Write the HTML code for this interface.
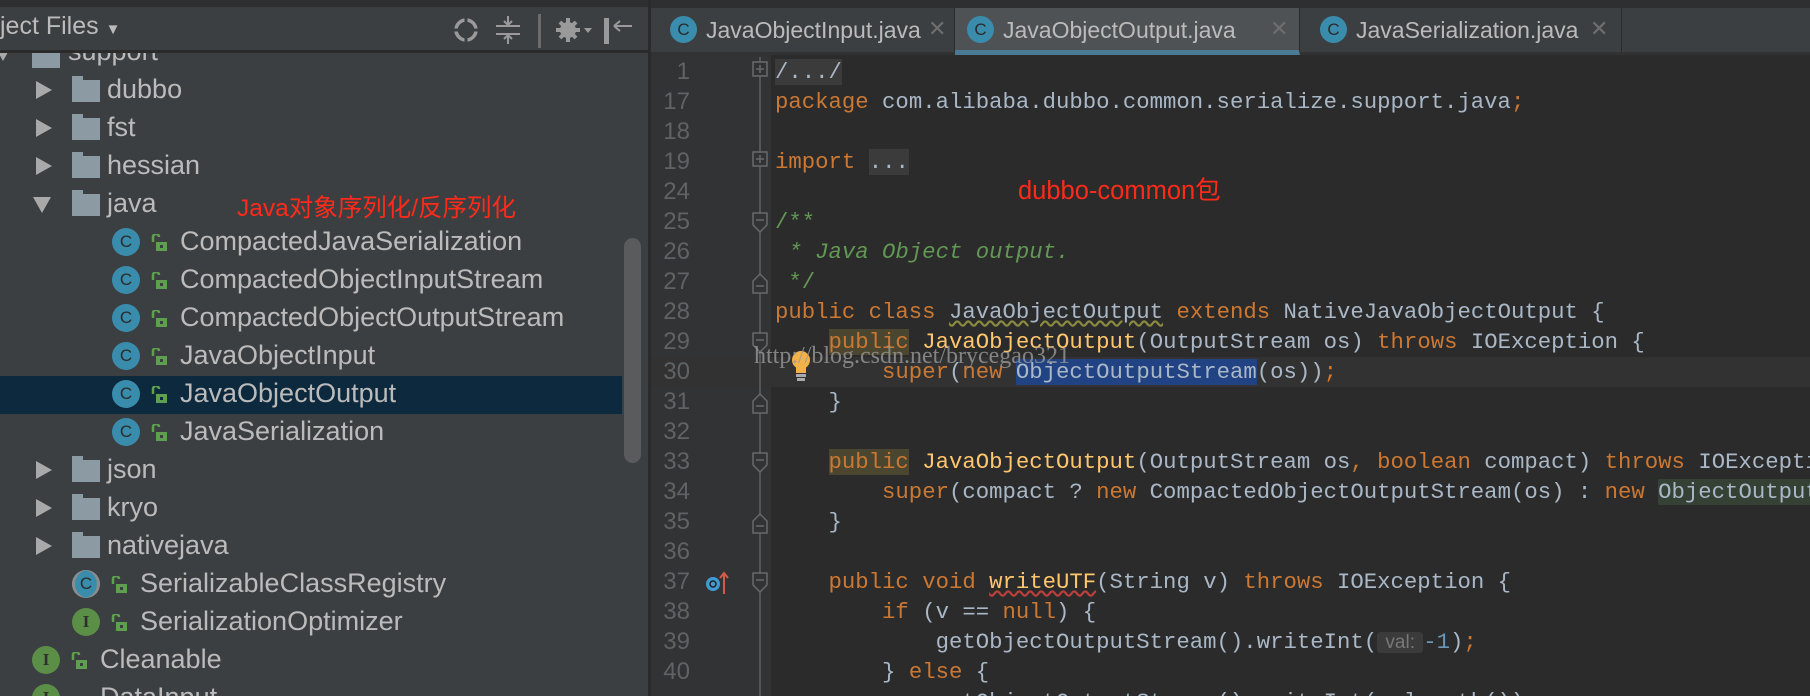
<!DOCTYPE html>
<html style="overflow:hidden;width:1810px;height:696px"><head><meta charset="utf-8"><style>
*{margin:0;padding:0;box-sizing:border-box}
body{width:1810px;height:696px;overflow:hidden;background:#2b2b2b;font-family:"Liberation Sans",sans-serif}
#wrap{position:relative;width:1810px;height:696px;overflow:hidden}
.abs{position:absolute}
#left{left:0;top:0;width:650px;height:696px;background:#3c3f41;overflow:hidden}
.row{position:absolute;left:0;width:622px;height:38px;font-size:27px;color:#bbbbbb;white-space:nowrap}
.row span.t{position:absolute;top:3px}
.arr{position:absolute;top:10px;width:0;height:0;border-top:9px solid transparent;border-bottom:9px solid transparent;border-left:16px solid #a9a9a9}
.arrd{position:absolute;top:12px;width:0;height:0;border-left:9px solid transparent;border-right:9px solid transparent;border-top:16px solid #a9a9a9}
.fold{position:absolute;top:9px;width:28px;height:22px;background:#8c9aa4}
.fold:before{content:"";position:absolute;left:0;top:-4px;width:11px;height:4px;background:#8c9aa4}
.ci{position:absolute;top:5px;width:28px;height:28px;border-radius:50%;background:#3a8cad;color:#2b2b2b;font-size:17px;text-align:center;line-height:28px;font-family:"Liberation Sans",sans-serif}
.ii{background:#5b8f48;font-family:"Liberation Serif",serif;font-weight:bold;color:#2f2f2f}
.lk{position:absolute;top:11px;width:18px;height:18px}
#code{font-family:"Liberation Mono",monospace;font-size:22.3px;color:#a9b7c6;white-space:pre}
.ln{position:absolute;left:650px;width:40px;text-align:right;font-family:"Liberation Sans",sans-serif;font-size:24px;color:#606366}
.cl{position:absolute;left:775px;height:30px;line-height:30px}
.k{color:#cc7832}.g{color:#629755;font-style:italic}.y{color:#ffc66d}.n{color:#6897bb}
.tab{position:absolute;top:8px;height:44px;font-size:23px;color:#bbbbbb;border-right:1px solid #2b2b2b}
.tab .c{position:absolute;left:12px;top:8px;width:27px;height:27px;border-radius:50%;background:#3a8cad;color:#2b2b2b;font-size:17px;text-align:center;line-height:27px}
.tab .tx{position:absolute;left:48px;top:9px}
.tab .x{position:absolute;top:8px;color:#6e6e6e;font-size:22px}
</style></head><body><div id="wrap">

<div id="left" class="abs">
 <div class="abs" style="left:0;top:53px;width:650px;height:643px;overflow:hidden">
  <div class="row" style="top:-20px"><div class="arrd" style="left:-6px"></div><div class="fold" style="left:32px;top:13px"></div><span class="t" style="left:68px">support</span></div>
 </div>
 <div class="abs" style="left:0;top:0;width:650px;height:7px;background:#2d2f30"></div>
 <div class="abs" style="left:0;top:7px;width:650px;height:46px;background:#3c3f41;border-bottom:3px solid #2b2b2b"></div>
 <div class="abs" style="left:0;top:12px;font-size:25px;color:#bbbbbb">ject Files <span style="font-size:15px">▼</span></div>
 <svg class="abs" style="left:450px;top:14px" width="190" height="34" viewBox="0 0 190 34">
  <circle cx="16" cy="16" r="10" fill="none" stroke="#9a9a9a" stroke-width="3.5"/>
  <path d="M16 4v8M16 20v8M4 16h8M20 16h8" stroke="#3c3f41" stroke-width="3"/>
  <path d="M46 12h24M46 20h24M58 2v8M58 22v8M54 7l4 4 4-4M54 25l4-4 4 4" stroke="#9a9a9a" stroke-width="2" fill="none"/>
  <rect x="88" y="0" width="3" height="34" fill="#6c6c6c"/>
  <circle cx="118" cy="16" r="8" fill="#9a9a9a"/><circle cx="118" cy="16" r="3" fill="#3c3f41"/>
  <path d="M118 4v24M106 16h24M110 8l16 16M126 8l-16 16" stroke="#9a9a9a" stroke-width="4"/>
  <path d="M134 14h8l-4 5z" fill="#9a9a9a"/>
  <rect x="154" y="4" width="5" height="26" fill="#9a9a9a"/>
  <path d="M164 12h18M164 12l6-5M164 12l6 5" stroke="#9a9a9a" stroke-width="2" fill="none"/>
 </svg>
 <div class="abs" style="left:0;top:376px;width:622px;height:38px;background:#0d293e"></div>
 <div class="row" style="top:71px"><div class="arr" style="left:36px"></div><div class="fold" style="left:72px"></div><span class="t" style="left:107px">dubbo</span></div>
 <div class="row" style="top:109px"><div class="arr" style="left:36px"></div><div class="fold" style="left:72px"></div><span class="t" style="left:107px">fst</span></div>
 <div class="row" style="top:147px"><div class="arr" style="left:36px"></div><div class="fold" style="left:72px"></div><span class="t" style="left:107px">hessian</span></div>
 <div class="row" style="top:185px"><div class="arrd" style="left:33px"></div><div class="fold" style="left:72px"></div><span class="t" style="left:107px">java</span><span class="t" style="left:237px;top:4px;color:#ff2a1a;font-size:24.5px;font-family:'Liberation Sans','Noto Sans CJK SC',sans-serif">Java对象序列化/反序列化</span></div>
 <div class="row" style="top:223px"><div class="ci" style="left:112px">C</div><svg class="lk" style="left:150px" viewBox="0 0 18 18"><path d="M3 8V3a3 3 0 0 1 6 0" fill="none" stroke="#5fa04e" stroke-width="2.5"/><rect x="6" y="8" width="11" height="9" fill="#5fa04e"/><rect x="10" y="11" width="3" height="3" fill="#3c3f41"/></svg><span class="t" style="left:180px">CompactedJavaSerialization</span></div>
 <div class="row" style="top:261px"><div class="ci" style="left:112px">C</div><svg class="lk" style="left:150px" viewBox="0 0 18 18"><path d="M3 8V3a3 3 0 0 1 6 0" fill="none" stroke="#5fa04e" stroke-width="2.5"/><rect x="6" y="8" width="11" height="9" fill="#5fa04e"/><rect x="10" y="11" width="3" height="3" fill="#3c3f41"/></svg><span class="t" style="left:180px">CompactedObjectInputStream</span></div>
 <div class="row" style="top:299px"><div class="ci" style="left:112px">C</div><svg class="lk" style="left:150px" viewBox="0 0 18 18"><path d="M3 8V3a3 3 0 0 1 6 0" fill="none" stroke="#5fa04e" stroke-width="2.5"/><rect x="6" y="8" width="11" height="9" fill="#5fa04e"/><rect x="10" y="11" width="3" height="3" fill="#3c3f41"/></svg><span class="t" style="left:180px">CompactedObjectOutputStream</span></div>
 <div class="row" style="top:337px"><div class="ci" style="left:112px">C</div><svg class="lk" style="left:150px" viewBox="0 0 18 18"><path d="M3 8V3a3 3 0 0 1 6 0" fill="none" stroke="#5fa04e" stroke-width="2.5"/><rect x="6" y="8" width="11" height="9" fill="#5fa04e"/><rect x="10" y="11" width="3" height="3" fill="#3c3f41"/></svg><span class="t" style="left:180px">JavaObjectInput</span></div>
 <div class="row" style="top:375px"><div class="ci" style="left:112px">C</div><svg class="lk" style="left:150px" viewBox="0 0 18 18"><path d="M3 8V3a3 3 0 0 1 6 0" fill="none" stroke="#5fa04e" stroke-width="2.5"/><rect x="6" y="8" width="11" height="9" fill="#5fa04e"/><rect x="10" y="11" width="3" height="3" fill="#0d293e"/></svg><span class="t" style="left:180px">JavaObjectOutput</span></div>
 <div class="row" style="top:413px"><div class="ci" style="left:112px">C</div><svg class="lk" style="left:150px" viewBox="0 0 18 18"><path d="M3 8V3a3 3 0 0 1 6 0" fill="none" stroke="#5fa04e" stroke-width="2.5"/><rect x="6" y="8" width="11" height="9" fill="#5fa04e"/><rect x="10" y="11" width="3" height="3" fill="#3c3f41"/></svg><span class="t" style="left:180px">JavaSerialization</span></div>
 <div class="row" style="top:451px"><div class="arr" style="left:36px"></div><div class="fold" style="left:72px"></div><span class="t" style="left:107px">json</span></div>
 <div class="row" style="top:489px"><div class="arr" style="left:36px"></div><div class="fold" style="left:72px"></div><span class="t" style="left:107px">kryo</span></div>
 <div class="row" style="top:527px"><div class="arr" style="left:36px"></div><div class="fold" style="left:72px"></div><span class="t" style="left:107px">nativejava</span></div>
 <div class="row" style="top:565px"><div class="ci" style="left:72px;background:#3a8cad;box-shadow:inset 3px 0 #8c8c8c,inset -3px 0 #8c8c8c">C</div><svg class="lk" style="left:110px" viewBox="0 0 18 18"><path d="M3 8V3a3 3 0 0 1 6 0" fill="none" stroke="#5fa04e" stroke-width="2.5"/><rect x="6" y="8" width="11" height="9" fill="#5fa04e"/><rect x="10" y="11" width="3" height="3" fill="#3c3f41"/></svg><span class="t" style="left:140px">SerializableClassRegistry</span></div>
 <div class="row" style="top:603px"><div class="ci ii" style="left:72px">I</div><svg class="lk" style="left:110px" viewBox="0 0 18 18"><path d="M3 8V3a3 3 0 0 1 6 0" fill="none" stroke="#5fa04e" stroke-width="2.5"/><rect x="6" y="8" width="11" height="9" fill="#5fa04e"/><rect x="10" y="11" width="3" height="3" fill="#3c3f41"/></svg><span class="t" style="left:140px">SerializationOptimizer</span></div>
 <div class="row" style="top:641px"><div class="ci ii" style="left:32px">I</div><svg class="lk" style="left:70px" viewBox="0 0 18 18"><path d="M3 8V3a3 3 0 0 1 6 0" fill="none" stroke="#5fa04e" stroke-width="2.5"/><rect x="6" y="8" width="11" height="9" fill="#5fa04e"/><rect x="10" y="11" width="3" height="3" fill="#3c3f41"/></svg><span class="t" style="left:100px">Cleanable</span></div>
 <div class="row" style="top:679px;height:17px;overflow:hidden"><div class="ci ii" style="left:32px">I</div><span class="t" style="left:100px">DataInput</span></div>
 <div class="abs" style="left:624px;top:238px;width:17px;height:225px;border-radius:9px;background:#595b5d"></div>
</div>
<div class="abs" style="left:648px;top:0;width:3px;height:696px;background:#2b2b2b"></div>

<div class="abs" style="left:651px;top:0;width:1159px;height:8px;background:#2d2f30"></div>
<div class="abs" style="left:651px;top:8px;width:1159px;height:47px;background:#3c3f41;border-bottom:3px solid #323232"></div>
<div class="tab" style="left:658px;width:297px"><div class="c">C</div><span class="tx">JavaObjectInput.java</span><span class="x" style="left:270px">✕</span></div>
<div class="tab" style="left:955px;width:345px;background:#4e5254;border-bottom:5px solid #4a7a94;height:47px"><div class="c">C</div><span class="tx">JavaObjectOutput.java</span><span class="x" style="left:315px">✕</span></div>
<div class="tab" style="left:1300px;width:322px"><div class="c" style="left:20px">C</div><span class="tx" style="left:56px">JavaSerialization.java</span><span class="x" style="left:290px">✕</span></div>

<div class="abs" style="left:651px;top:55px;width:120px;height:641px;background:#313335"></div>
<div class="abs" style="left:651px;top:357px;width:1159px;height:30px;background:#323232"></div>
<div class="abs" style="left:759px;top:57px;width:2px;height:639px;background:#555"></div>

<div id="code">
<div class="ln" style="top:58px">1</div>
<div class="ln" style="top:88px">17</div>
<div class="ln" style="top:118px">18</div>
<div class="ln" style="top:148px">19</div>
<div class="ln" style="top:178px">24</div>
<div class="ln" style="top:208px">25</div>
<div class="ln" style="top:238px">26</div>
<div class="ln" style="top:268px">27</div>
<div class="ln" style="top:298px">28</div>
<div class="ln" style="top:328px">29</div>
<div class="ln" style="top:358px">30</div>
<div class="ln" style="top:388px">31</div>
<div class="ln" style="top:418px">32</div>
<div class="ln" style="top:448px">33</div>
<div class="ln" style="top:478px">34</div>
<div class="ln" style="top:508px">35</div>
<div class="ln" style="top:538px">36</div>
<div class="ln" style="top:568px">37</div>
<div class="ln" style="top:598px">38</div>
<div class="ln" style="top:628px">39</div>
<div class="ln" style="top:658px">40</div>

<div class="cl" style="top:57px"><span style="background:#3b3b3b;color:#a9b7c6">/.../</span></div>
<div class="cl" style="top:87px"><span class="k">package</span> com.alibaba.dubbo.common.serialize.support.java<span class="k">;</span></div>
<div class="cl" style="top:147px"><span class="k">import</span> <span style="background:#3b3b3b">...</span></div>
<div class="cl" style="top:207px"><span class="g" style="font-style:normal">/**</span></div>
<div class="cl" style="top:237px"><span class="g"> * Java Object output.</span></div>
<div class="cl" style="top:267px"><span class="g" style="font-style:normal"> */</span></div>
<div class="cl" style="top:297px"><span class="k">public class</span> <span style="text-decoration:underline wavy #8a8a40">JavaObjectOutput</span> <span class="k">extends</span> NativeJavaObjectOutput {</div>
<div class="cl" style="top:327px">    <span class="k" style="background:#4a4630">public</span> <span class="y">JavaObjectOutput</span>(OutputStream os) <span class="k">throws</span> IOException {</div>
<div class="cl" style="top:357px">        <span class="k">super</span>(<span class="k">new</span> <span style="background:#214283">ObjectOutputStream</span>(os))<span class="k">;</span></div>
<div class="cl" style="top:387px">    }</div>
<div class="cl" style="top:447px">    <span class="k" style="background:#4a4630">public</span> <span class="y">JavaObjectOutput</span>(OutputStream os<span class="k">, boolean</span> compact) <span class="k">throws</span> IOException {</div>
<div class="cl" style="top:477px">        <span class="k">super</span>(compact ? <span class="k">new</span> CompactedObjectOutputStream(os) : <span class="k">new</span> <span style="background:#344134">ObjectOutputStream</span>(os))<span class="k">;</span></div>
<div class="cl" style="top:507px">    }</div>
<div class="cl" style="top:567px">    <span class="k">public void</span> <span class="y" style="text-decoration:underline wavy #bc3f3c">writeUTF</span>(String v) <span class="k">throws</span> IOException {</div>
<div class="cl" style="top:597px">        <span class="k">if</span> (v == <span class="k">null</span>) {</div>
<div class="cl" style="top:627px">            getObjectOutputStream().writeInt(<span style="background:#3b3b3b;color:#787878;font-family:'Liberation Sans',sans-serif;font-size:19px;border-radius:4px;padding:0 3px"> val: </span><span class="n">-1</span>)<span class="k">;</span></div>
<div class="cl" style="top:657px">        } <span class="k">else</span> {</div>
<div class="cl" style="top:687px;height:9px;overflow:hidden;line-height:30px">            getObjectOutputStream().writeInt(v.length())<span class="k">;</span></div>
</div>

<svg class="abs" style="left:750px;top:55px" width="22" height="641" viewBox="0 0 22 641">
 <g fill="#313335" stroke="#6a6a6a" stroke-width="1.5">
  <rect x="3" y="7" width="14" height="14"/><path d="M6 14h8M10 10v8"/>
  <rect x="3" y="97" width="14" height="14"/><path d="M6 104h8M10 100v8"/>
  <path d="M3 158h14v12l-7 7-7-7z"/><path d="M6 165h8"/>
  <path d="M3 238h14v-12l-7-7-7 7z"/><path d="M6 231h8"/>
  <path d="M3 278h14v12l-7 7-7-7z"/><path d="M6 285h8"/>
  <path d="M3 358h14v-12l-7-7-7 7z"/><path d="M6 351h8"/>
  <path d="M3 398h14v12l-7 7-7-7z"/><path d="M6 405h8"/>
  <path d="M3 478h14v-12l-7-7-7 7z"/><path d="M6 471h8"/>
  <path d="M3 518h14v12l-7 7-7-7z"/><path d="M6 525h8"/>
 </g>
</svg>
<svg class="abs" style="left:704px;top:568px" width="30" height="30" viewBox="0 0 30 30">
 <circle cx="9" cy="16" r="7" fill="#3f9bd1"/><circle cx="9" cy="16" r="3" fill="none" stroke="#222" stroke-width="1.5"/>
 <path d="M20 26V5M16 10l4-5 4 5" stroke="#d45b4b" stroke-width="2" fill="none"/>
</svg>
<svg class="abs" style="left:789px;top:349px" width="24" height="34" viewBox="0 0 24 34">
 <circle cx="12" cy="11" r="9" fill="#f3b14a"/><path d="M7 18h10v6H7z" fill="#f3b14a"/>
 <rect x="7" y="25" width="10" height="3" fill="#aaa"/><rect x="8" y="29" width="8" height="3" fill="#aaa"/>
</svg>
<div class="abs" style="left:754px;top:343px;font-family:'Liberation Serif',serif;font-size:24px;color:#9a9a9a;opacity:0.8">http://blog.csdn.net/brycegao321</div>
<div class="abs" style="left:1018px;top:170px;font-size:25.5px;color:#ff2a1a;font-family:'Liberation Sans','Noto Sans CJK SC',sans-serif">dubbo-common包</div>
</div></body></html>
